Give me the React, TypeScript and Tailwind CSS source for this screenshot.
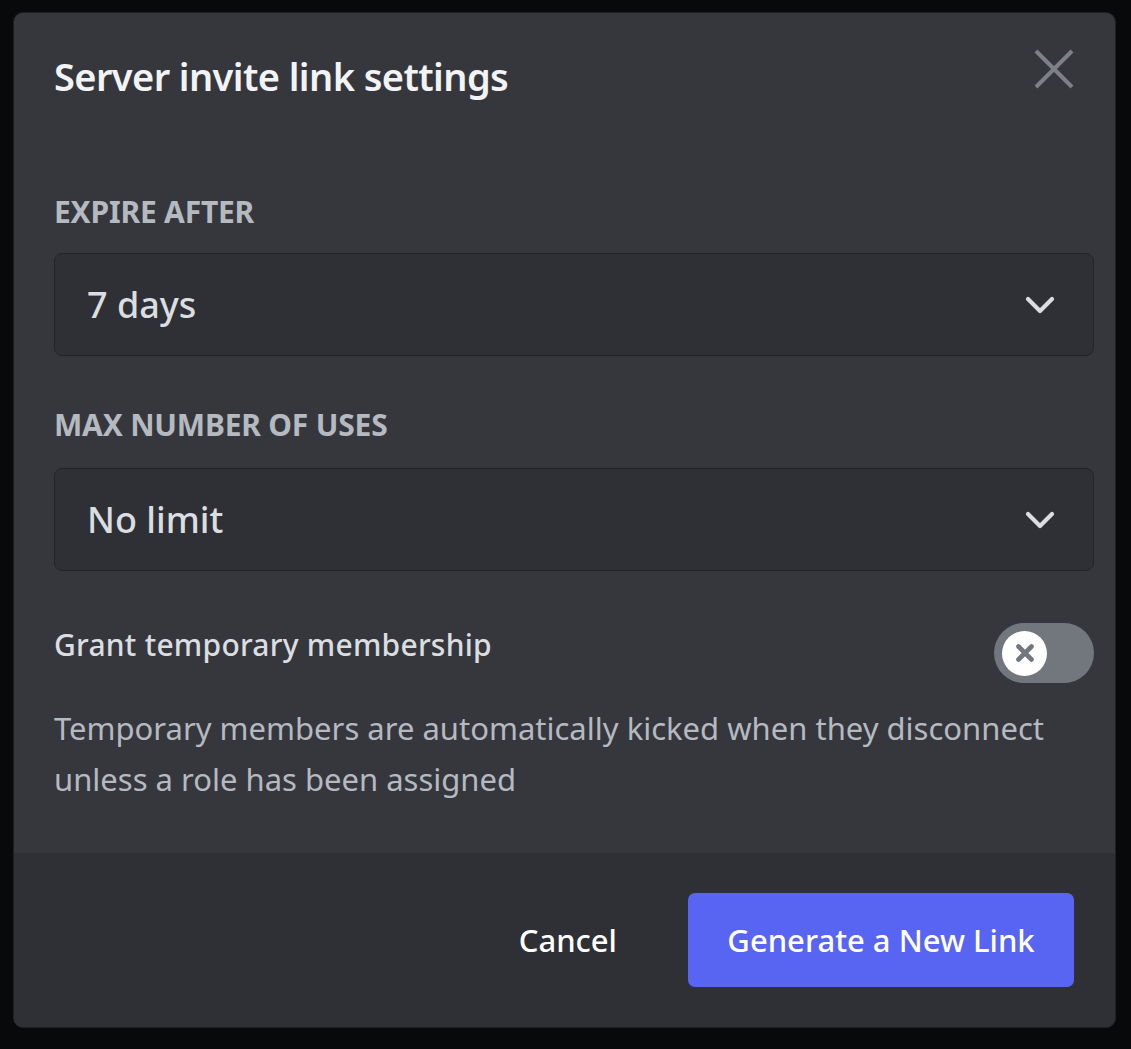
import { useState } from "react";

type SelectFieldProps = {
  label: string;
  value: string;
  labelGap: string;
};

function Chevron() {
  return (
    <svg width="30" height="18" viewBox="0 0 30 18" fill="none" className="shrink-0">
      <path d="M3 3L15 15L27 3" stroke="#dbdee1" strokeWidth="4.2" strokeLinecap="round" strokeLinejoin="round" />
    </svg>
  );
}

function SelectField({ label, value, labelGap }: SelectFieldProps) {
  return (
    <div className="flex flex-col">
      <h2 className={`text-[30px] leading-[36px] font-bold uppercase tracking-[-0.2px] text-[#b5bac1] ${labelGap}`}>{label}</h2>
      <div className="flex h-[103px] items-center justify-between rounded-[8px] border border-[#232428] bg-[#2f3035] pl-[32px] pr-[38px]">
        <span className="text-[36px] font-medium text-[#dbdee1]">{value}</span>
        <Chevron />
      </div>
    </div>
  );
}

function Toggle({ checked, onChange }: { checked: boolean; onChange: (next: boolean) => void }) {
  return (
    <button
      type="button"
      onClick={() => onChange(!checked)}
      className="flex h-[60px] w-[100px] shrink-0 items-center rounded-full bg-[#72767d] pl-[8px]"
    >
      <span className="flex h-[45px] w-[45px] items-center justify-center rounded-full bg-white">
        <svg width="20" height="20" viewBox="0 0 20 20" fill="none">
          <path d="M3.5 3.5L16.5 16.5M16.5 3.5L3.5 16.5" stroke="#72767d" strokeWidth="4.6" strokeLinecap="round" />
        </svg>
      </span>
    </button>
  );
}

export default function App() {
  const [temporary, setTemporary] = useState(false);

  return (
    <div className="min-h-screen bg-[#08090a] pl-[13px] pt-[12px] font-['Noto_Sans',sans-serif]">
      <div className="flex h-[1016px] w-[1103px] flex-col overflow-hidden rounded-[10px] border border-[#1f2023] bg-[#36373d]">
        {/* header */}
        <div className="flex items-start justify-between pl-[40px] pr-[41px] pt-[36px]">
          <h1 className="mt-[3px] text-[38px] leading-[48px] font-semibold tracking-[-0.6px] text-[#f2f3f5]">
            Server invite link settings
          </h1>
          <button type="button" className="h-[40px] w-[40px]">
            <svg width="40" height="40" viewBox="0 0 40 40" fill="none">
              <path d="M2 2L38 38M38 2L2 38" stroke="#7e8087" strokeWidth="4" />
            </svg>
          </button>
        </div>

        {/* body */}
        <div className="flex flex-1 flex-col pl-[40px] pr-[21px] pt-[94px]">
          <SelectField label="Expire After" value="7 days" labelGap="mb-[23px]" />
          <div className="mt-[51px]">
            <SelectField label="Max Number of Uses" value="No limit" labelGap="mb-[25px]" />
          </div>

          <div className="mt-[52px] flex items-start justify-between">
            <span className="mt-[4px] text-[30px] leading-[36px] font-medium tracking-[0.25px] text-[#dbdee1]">
              Grant temporary membership
            </span>
            <Toggle checked={temporary} onChange={setTemporary} />
          </div>

          <p className="mt-[20px] pr-[20px] text-[31px] leading-[51px] text-[#b5bac1]">
            Temporary members are automatically kicked when they disconnect unless a role has been assigned
          </p>
        </div>

        {/* footer */}
        <div className="flex h-[174px] items-center justify-end gap-[35px] bg-[#2f3035] pr-[41px]">
          <button type="button" className="h-[94px] px-[36px] text-[31px] font-medium text-white">
            Cancel
          </button>
          <button type="button" className="h-[94px] w-[386px] rounded-[7px] bg-[#5865f2] text-[31px] font-medium text-white">
            Generate a New Link
          </button>
        </div>
      </div>
    </div>
  );
}
